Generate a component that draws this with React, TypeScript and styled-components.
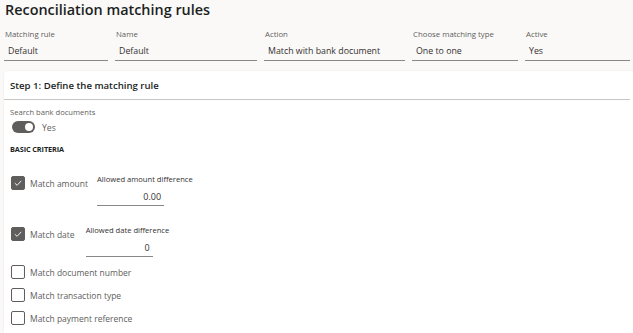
import React from "react";
import styled, { createGlobalStyle } from "styled-components";

const GlobalStyle = createGlobalStyle`
  html, body {
    margin: 0;
    padding: 0;
    background: #faf9f8;
    font-family: "Open Sans", "Noto Sans", sans-serif;
    color: #323130;
  }
`;

const Page = styled.div`
  width: 633px;
  height: 333px;
  overflow: hidden;
  padding: 0 0 0 4px;
  box-sizing: border-box;
`;

const Title = styled.h1`
  margin: 0;
  padding: 0 0 0 1px;
  height: 26px;
  font-size: 14.4px;
  font-weight: 600;
  line-height: 20px;
  color: #201f1e;
`;

const FieldRow = styled.div`
  display: flex;
  gap: 7px;
  height: 45px;
`;

const Field = styled.div<{ $w: number }>`
  width: ${(p) => p.$w}px;
  display: flex;
  flex-direction: column;
`;

const FieldLabel = styled.div`
  font-size: 7.8px;
  line-height: 12px;
  color: #605e5c;
  padding: 2px 0 0 1px;
`;

const FieldValue = styled.div`
  font-size: 8.8px;
  line-height: 18px;
  height: 18px;
  padding: 2px 0 0 4px;
  border-bottom: 1px solid #8a8886;
  color: #323130;
`;

const Panel = styled.section`
  background: #fff;
  border-radius: 4px 0 0 0;
  box-shadow: 0 0 2px rgba(0, 0, 0, 0.08);
  height: 270px;
`;

const PanelHeader = styled.div`
  height: 28px;
  display: flex;
  align-items: center;
  padding-left: 6px;
  font-size: 9.6px;
  font-weight: 600;
  color: #201f1e;
  border-bottom: 1px solid #c8c6c4;
  margin-right: 3px;
`;

const PanelBody = styled.div`
  padding: 6px 6px 0 6px;
`;

const SmallLabel = styled.div`
  font-size: 7.6px;
  line-height: 12px;
  color: #605e5c;
`;

const ToggleRow = styled.div`
  display: flex;
  align-items: center;
  gap: 7px;
  height: 16px;
  margin-top: 1px;
  padding-left: 2px;
`;

const Toggle = styled.div<{ $on: boolean }>`
  width: 23px;
  height: 12px;
  border-radius: 6px;
  background: ${(p) => (p.$on ? "#605e5c" : "#fff")};
  position: relative;
  &::after {
    content: "";
    position: absolute;
    top: 2px;
    left: ${(p) => (p.$on ? "13px" : "2px")};
    width: 8px;
    height: 8px;
    border-radius: 50%;
    background: #fff;
  }
`;

const ToggleText = styled.span`
  font-size: 8.6px;
  line-height: 12px;
  padding-top: 2px;
  color: #605e5c;
`;

const SectionTitle = styled.div`
  font-size: 7.3px;
  line-height: 10px;
  font-weight: 700;
  color: #201f1e;
  margin-top: 9px;
  letter-spacing: -0.1px;
`;

const CriteriaList = styled.div`
  display: flex;
  flex-direction: column;
  margin-top: 18px;
`;

const CriteriaRow = styled.div<{ $h: number }>`
  display: flex;
  align-items: flex-start;
  height: ${(p) => p.$h}px;
`;

const CheckWrap = styled.label`
  display: flex;
  align-items: center;
  gap: 5px;
  height: 14px;
  padding-left: 1px;
  margin-top: 4px;
  font-size: 8.5px;
  color: #605e5c;
  white-space: nowrap;
`;

const Box = styled.span<{ $checked: boolean }>`
  width: 14px;
  height: 14px;
  border-radius: 2px;
  box-sizing: border-box;
  border: 1px solid #605e5c;
  background: ${(p) => (p.$checked ? "#605e5c" : "#fff")};
  display: flex;
  align-items: center;
  justify-content: center;
`;

const Sub = styled.div<{ $w: number; $ml: number }>`
  width: ${(p) => p.$w}px;
  margin-left: ${(p) => p.$ml}px;
  margin-top: 1px;
`;

const SubLabel = styled.div`
  font-size: 7.6px;
  line-height: 12px;
  color: #323130;
  white-space: nowrap;
`;

const SubValue = styled.div`
  font-size: 9px;
  line-height: 16px;
  text-align: right;
  padding: 4px 3px 0 0;
  border-bottom: 1px solid #8a8886;
  color: #323130;
`;

const Check = () => (
  <svg width="10" height="10" viewBox="0 0 12 12">
    <path d="M2.2 6.2 L4.9 8.8 L9.9 3.4" fill="none" stroke="#fff" strokeWidth="1.1" />
  </svg>
);

const Criterion: React.FC<{ label: string; checked?: boolean }> = ({ label, checked = false }) => (
  <CheckWrap>
    <Box $checked={checked}>{checked && <Check />}</Box>
    {label}
  </CheckWrap>
);

const fields = [
  { label: "Matching rule", value: "Default", w: 104 },
  { label: "Name", value: "Default", w: 142 },
  { label: "Action", value: "Match with bank document", w: 141 },
  { label: "Choose matching type", value: "One to one", w: 106 },
  { label: "Active", value: "Yes", w: 105 },
];

export default function App() {
  return (
    <Page>
      <GlobalStyle />
      <Title>Reconciliation matching rules</Title>
      <FieldRow>
        {fields.map((f) => (
          <Field key={f.label} $w={f.w}>
            <FieldLabel>{f.label}</FieldLabel>
            <FieldValue>{f.value}</FieldValue>
          </Field>
        ))}
      </FieldRow>
      <Panel>
        <PanelHeader>Step 1: Define the matching rule</PanelHeader>
        <PanelBody>
          <SmallLabel>Search bank documents</SmallLabel>
          <ToggleRow>
            <Toggle $on />
            <ToggleText>Yes</ToggleText>
          </ToggleRow>
          <SectionTitle>BASIC CRITERIA</SectionTitle>
          <CriteriaList>
            <CriteriaRow $h={51}>
              <Criterion label="Match amount" checked />
              <Sub $w={67} $ml={9}>
                <SubLabel>Allowed amount difference</SubLabel>
                <SubValue>0.00</SubValue>
              </Sub>
            </CriteriaRow>
            <CriteriaRow $h={38}>
              <Criterion label="Match date" checked />
              <Sub $w={67} $ml={11}>
                <SubLabel>Allowed date difference</SubLabel>
                <SubValue>0</SubValue>
              </Sub>
            </CriteriaRow>
            <CriteriaRow $h={23}>
              <Criterion label="Match document number" />
            </CriteriaRow>
            <CriteriaRow $h={23}>
              <Criterion label="Match transaction type" />
            </CriteriaRow>
            <CriteriaRow $h={24}>
              <Criterion label="Match payment reference" />
            </CriteriaRow>
          </CriteriaList>
        </PanelBody>
      </Panel>
    </Page>
  );
}
